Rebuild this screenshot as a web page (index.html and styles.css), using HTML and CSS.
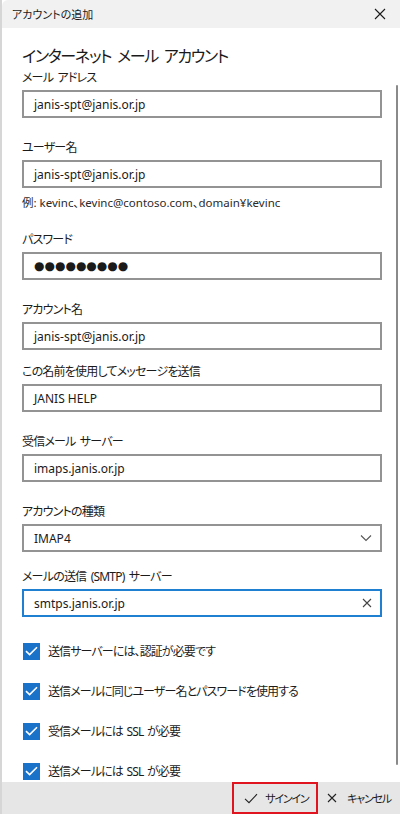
FILE: index.html
```html
<!DOCTYPE html>
<html lang="ja">
<head>
<meta charset="utf-8">
<title>アカウントの追加</title>
<link rel="stylesheet" href="styles.css">
</head>
<body>
<div class="window">
  <div class="titlebar">
    <span class="title">アカウントの追加</span>
    <svg class="close" width="12" height="12" viewBox="0 0 12 12"><path d="M1 1L11 11M11 1L1 11" stroke="#1a1a1a" stroke-width="1.1" fill="none"/></svg>
  </div>
  <div class="content">
    <h1 class="heading">インターネット メール アカウント</h1>

    <div class="field f-first">
      <div class="label">メール アドレス</div>
      <div class="input">janis-spt@janis.or.jp</div>
    </div>

    <div class="field">
      <div class="label">ユーザー名</div>
      <div class="input">janis-spt@janis.or.jp</div>
      <div class="hint">例: kevinc、kevinc@contoso.com、domain¥kevinc</div>
    </div>

    <div class="field f-after-hint">
      <div class="label">パスワード</div>
      <div class="input"><span class="dots">●●●●●●●●●</span></div>
    </div>

    <div class="field">
      <div class="label">アカウント名</div>
      <div class="input">janis-spt@janis.or.jp</div>
    </div>

    <div class="field f-tight">
      <div class="label">この名前を使用してメッセージを送信</div>
      <div class="input">JANIS HELP</div>
    </div>

    <div class="field">
      <div class="label">受信メール サーバー</div>
      <div class="input">imaps.janis.or.jp</div>
    </div>

    <div class="field">
      <div class="label">アカウントの種類</div>
      <div class="input select">
        <span>IMAP4</span>
        <svg width="12" height="8" viewBox="0 0 12 8"><path d="M1 1.5L6 6.5L11 1.5" stroke="#555" stroke-width="1.1" fill="none"/></svg>
      </div>
    </div>

    <div class="field f-smtp">
      <div class="label">メールの送信 (SMTP) サーバー</div>
      <div class="input focused">
        <span>smtps.janis.or.jp</span>
        <svg width="10" height="10" viewBox="0 0 10 10"><path d="M1 1L9 9M9 1L1 9" stroke="#444" stroke-width="1.1" fill="none"/></svg>
      </div>
    </div>

    <div class="checks">
      <div class="check-row"><span class="box"><svg width="13" height="10" viewBox="0 0 13 10"><path d="M1 5.2L4.6 8.6L12 1.2" stroke="#fff" stroke-width="1.6" fill="none"/></svg></span><span class="check-text">送信サーバーには、認証が必要です</span></div>
      <div class="check-row"><span class="box"><svg width="13" height="10" viewBox="0 0 13 10"><path d="M1 5.2L4.6 8.6L12 1.2" stroke="#fff" stroke-width="1.6" fill="none"/></svg></span><span class="check-text">送信メールに同じユーザー名とパスワードを使用する</span></div>
      <div class="check-row"><span class="box"><svg width="13" height="10" viewBox="0 0 13 10"><path d="M1 5.2L4.6 8.6L12 1.2" stroke="#fff" stroke-width="1.6" fill="none"/></svg></span><span class="check-text">受信メールには SSL が必要</span></div>
      <div class="check-row"><span class="box"><svg width="13" height="10" viewBox="0 0 13 10"><path d="M1 5.2L4.6 8.6L12 1.2" stroke="#fff" stroke-width="1.6" fill="none"/></svg></span><span class="check-text">送信メールには SSL が必要</span></div>
    </div>

    <div class="scrollbar"></div>
  </div>
  <div class="footer">
    <div class="btn signin">
      <svg width="14" height="11" viewBox="0 0 14 11"><path d="M1 5.8L5 9.6L13 1.2" stroke="#222" stroke-width="1.1" fill="none"/></svg>
      <span>サインイン</span>
    </div>
    <div class="btn cancel">
      <svg width="10" height="10" viewBox="0 0 10 10"><path d="M1 1L9 9M9 1L1 9" stroke="#222" stroke-width="1.1" fill="none"/></svg>
      <span>キャンセル</span>
    </div>
  </div>
</div>
</body>
</html>
```
FILE: styles.css
```css
* { box-sizing: border-box; }
html, body {
  margin: 0;
  padding: 0;
  background: #ffffff;
}
body {
  width: 400px;
  height: 814px;
  overflow: hidden;
  font-family: "Noto Sans", "Noto Sans CJK JP", sans-serif;
  color: #1b1b1b;
  font-feature-settings: "palt";
}
.window {
  display: flex;
  flex-direction: column;
  height: 814px;
  border-left: 2px solid #d6d6d6;
}
.titlebar {
  height: 28px;
  flex: none;
  background: #f1f1f1;
  display: flex;
  align-items: center;
  justify-content: space-between;
  padding: 0 14px 0 10px;
  border-top-left-radius: 6px;
}
.title {
  font-size: 11px;
  color: #1a1a1a;
}
.close { display: block; }
.content {
  flex: 1;
  position: relative;
  overflow: hidden;
  padding: 16px 18px 0 20px;
}
.heading {
  margin: 0;
  font-size: 16px;
  font-weight: 400;
  letter-spacing: -1.3px;
  word-spacing: 3px;
  line-height: 24px;
  color: #1a1a1a;
}
.field { margin-top: 21px; }
.field.f-first { margin-top: 1px; }
.field.f-after-hint { margin-top: 19px; }
.field.f-tight { margin-top: 13px; }
.field.f-smtp { margin-top: 16px; }
.label {
  font-size: 12px;
  letter-spacing: -0.8px;
  word-spacing: 2px;
  line-height: 18px;
  margin-bottom: 3px;
}
.input {
  height: 28px;
  border: 2px solid #939393;
  display: flex;
  align-items: center;
  justify-content: space-between;
  padding: 0 8px 0 10px;
  font-size: 12px;
  color: #1a1a1a;
}
.input.focused { border-color: #1f7fd0; }
.dots {
  font-family: "DejaVu Sans", sans-serif;
  font-size: 12px;
  letter-spacing: 0;
}
.hint {
  font-size: 11.5px;
  line-height: 18px;
  margin-top: 6px;
  color: #2a2a2a;
}
.checks { margin-top: 14px; }
.check-row {
  height: 40px;
  display: flex;
  align-items: center;
  gap: 8px;
  padding-left: 1px;
}
.check-text {
  font-size: 12px;
  letter-spacing: -0.9px;
  word-spacing: 1.5px;
}
.box {
  width: 17px;
  height: 17px;
  background: #1a73c9;
  display: flex;
  align-items: center;
  justify-content: center;
  flex: none;
}
.scrollbar {
  position: absolute;
  right: 2px;
  top: 57px;
  width: 2px;
  height: 680px;
  background: #8a8a8a;
  border-radius: 1px;
}
.footer {
  height: 32px;
  flex: none;
  background: #e6e6e6;
  display: flex;
  justify-content: flex-end;
  align-items: stretch;
  padding-right: 9px;
}
.btn {
  display: flex;
  align-items: center;
  font-size: 11px;
  letter-spacing: -1.2px;
  color: #1a1a1a;
  white-space: nowrap;
  flex: none;
}
.signin {
  width: 86px;
  border: 2px solid #e0141e;
  padding-left: 10px;
  gap: 7px;
}
.cancel {
  padding-left: 9px;
  gap: 10px;
}
```
